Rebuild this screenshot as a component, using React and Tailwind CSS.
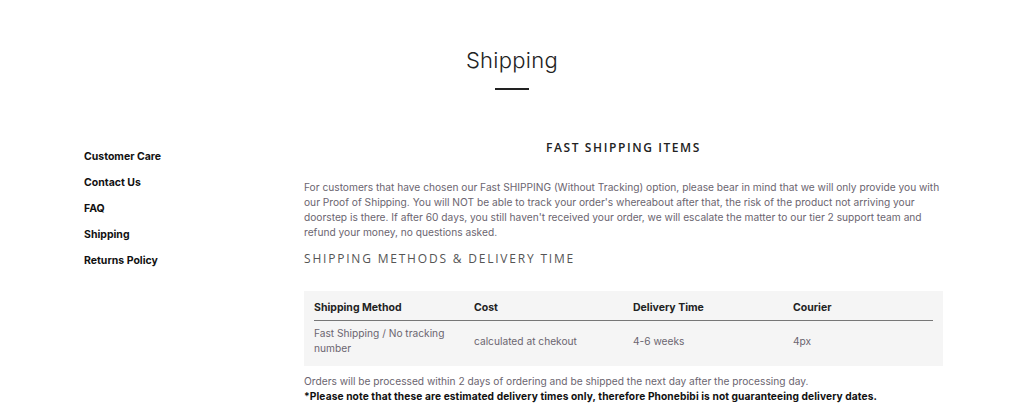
const links = ["Customer Care", "Contact Us", "FAQ", "Shipping", "Returns Policy"];

const rows = [
  {
    method: "Fast Shipping / No tracking number",
    cost: "calculated at chekout",
    time: "4-6 weeks",
    courier: "4px",
  },
];

export default function App() {
  return (
    <div className="w-[1024px] h-[410px] overflow-hidden bg-white font-['Inter',sans-serif] text-[#222]">
      {/* Page title */}
      <div className="flex flex-col items-center pt-[45px]">
        <h1 className="text-[22px] leading-[30px] font-light tracking-[0.3px] text-[#222]">Shipping</h1>
        <div className="mt-[13px] w-[34px] h-[2px] bg-[#222]" />
      </div>

      <div className="flex pl-[84px] pr-[81px] pt-[48px]">
        {/* Sidebar */}
        <ul className="w-[220px] shrink-0 pt-[11px] flex flex-col gap-[11px]">
          {links.map((l) => (
            <li key={l} className="text-[10.5px] leading-[15px] font-bold text-[#111]">
              {l}
            </li>
          ))}
        </ul>

        {/* Content */}
        <div className="flex-1">
          <h2 className="text-center font-['Open_Sans',sans-serif] text-[12px] leading-[20px] font-semibold tracking-[1.6px] text-[#222]">
            FAST SHIPPING ITEMS
          </h2>
          <p className="mt-[22px] text-[10.2px] leading-[15px] text-[#6b6570]">
            For customers that have chosen our Fast SHIPPING (Without Tracking) option, please bear in mind that we will only provide you with our Proof of Shipping. You will NOT be able to track your order's whereabout after that, the risk of the product not arriving your doorstep is there. If after 60 days, you still haven't received your order, we will escalate the matter to our tier 2 support team and refund your money, no questions asked.
          </p>
          <h3 className="mt-[10px] font-['Open_Sans',sans-serif] text-[12px] leading-[18px] tracking-[1.8px] text-[#555]">
            SHIPPING METHODS &amp; DELIVERY TIME
          </h3>

          <div className="mt-[23px] bg-[#f5f5f5] px-[10px] pt-[4px] pb-[10px]">
            <div className="grid grid-cols-[160px_159px_160px_1fr] border-b border-[#777] h-[26px] items-center">
              <div className="text-[10.5px] font-bold text-[#222]">Shipping Method</div>
              <div className="text-[10.5px] font-bold text-[#222]">Cost</div>
              <div className="text-[10.5px] font-bold text-[#222]">Delivery Time</div>
              <div className="text-[10.5px] font-bold text-[#222]">Courier</div>
            </div>
            {rows.map((r) => (
              <div key={r.method} className="grid grid-cols-[160px_159px_160px_1fr] items-center pt-[5px] text-[10.2px] leading-[15px] text-[#6b6570]">
                <div className="pr-[20px]">{r.method}</div>
                <div>{r.cost}</div>
                <div>{r.time}</div>
                <div>{r.courier}</div>
              </div>
            ))}
          </div>

          <p className="mt-[8px] text-[10.2px] leading-[15px] text-[#6b6570]">
            Orders will be processed within 2 days of ordering and be shipped the next day after the processing day.
          </p>
          <p className="text-[10.2px] leading-[15px] font-bold tracking-[0.1px] text-[#111]">
            *Please note that these are estimated delivery times only, therefore Phonebibi is not guaranteeing delivery dates.
          </p>
        </div>
      </div>
    </div>
  );
}
